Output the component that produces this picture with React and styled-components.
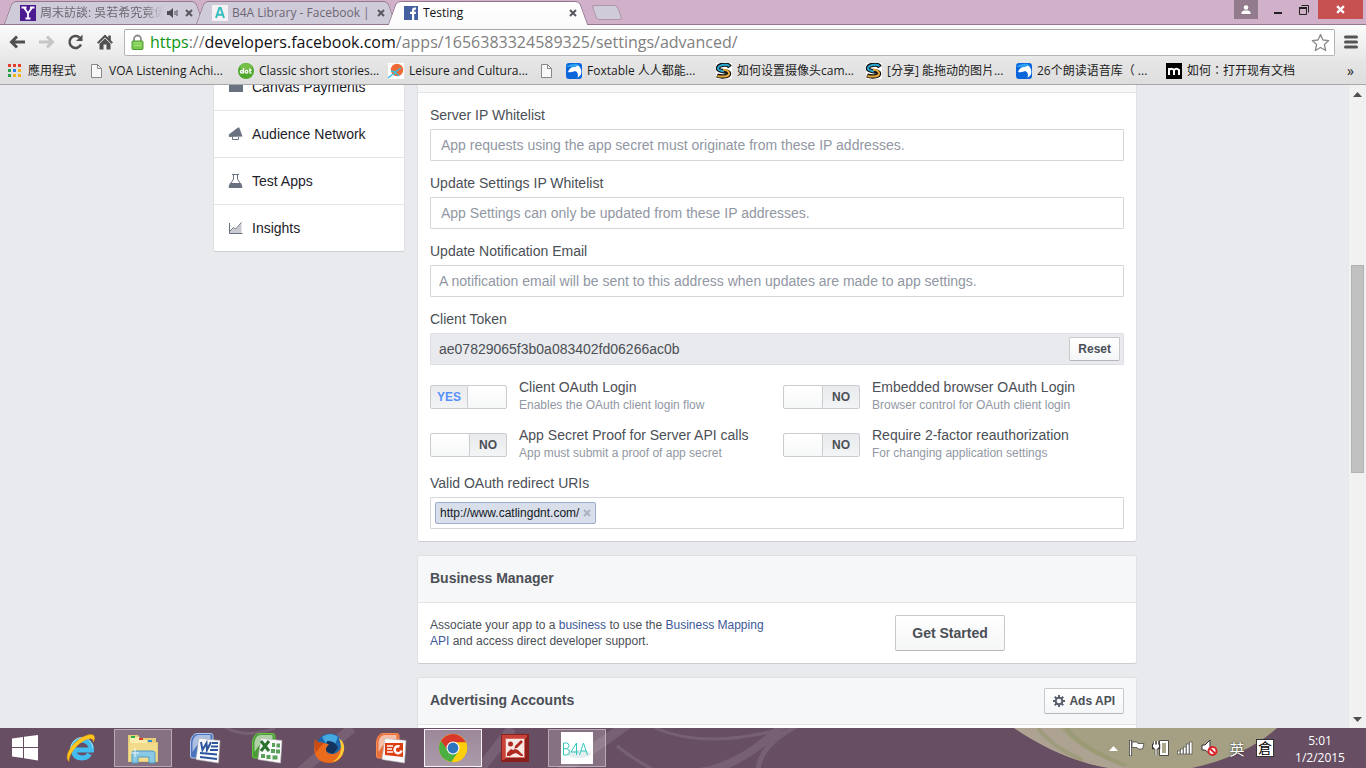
import React from "react";
import styled, { createGlobalStyle, css } from "styled-components";

const ui = `"Open Sans", "Noto Sans CJK TC", sans-serif`;
const fb = `"Liberation Sans", Arial, sans-serif`;

const Global = createGlobalStyle`
  * { box-sizing: border-box; }
  html, body { margin: 0; }
  body { font-family: ${fb}; font-size: 14px; color: #4b4f56; }
  button, input { font: inherit; color: inherit; }
`;

const Screen = styled.div`
  display: flex;
  flex-direction: column;
  height: 100vh;
  overflow: hidden;
`;

/* ---------- browser window ---------- */
const TabStrip = styled.header`
  display: flex;
  flex: none;
  height: 25px;
  padding-left: 8px;
  background: #d1b0c9;
  border-bottom: 1px solid #94788d;
  font-family: ${ui};
  font-size: 12px;
`;

const TabBox = styled.div`
  position: relative;
  display: flex;
  align-items: center;
  flex: none;
  width: 192px;
  height: 25px;
  padding: 0 4px 0 12px;
  z-index: ${(p) => (p.$active ? 2 : 1)};
  color: ${(p) => (p.$active ? "#111" : "#6c6873")};

  &::before,
  &::after {
    content: "";
    position: absolute;
    z-index: -1;
    top: 1px;
    bottom: ${(p) => (p.$active ? 0 : 1)}px;
    width: 60%;
    background: ${(p) => (p.$active ? "linear-gradient(#fff, #fbfbfb)" : "#d0cbd9")};
    border: 0 solid #94788d;
    border-top-width: 1px;
  }
  &::before {
    left: 0;
    transform: skewX(-20deg);
    border-left-width: 1px;
    border-top-left-radius: 5px;
  }
  &::after {
    right: 0;
    transform: skewX(20deg);
    border-right-width: 1px;
    border-top-right-radius: 5px;
  }
`;

const TabLabel = styled.span`
  flex: 1;
  min-width: 0;
  margin-left: 4px;
  overflow: hidden;
  white-space: nowrap;
  line-height: 20px;
  ${(p) =>
    p.$fade &&
    css`
      margin-right: 4px;
      mask-image: linear-gradient(to right, #000 85%, transparent);
    `}
`;

const BareButton = styled.button`
  display: flex;
  align-items: center;
  justify-content: center;
  flex: none;
  padding: 0;
  border: 0;
  background: none;
`;

const TabClose = styled(BareButton)`
  width: 14px;
  height: 14px;
  margin-left: 4px;
`;

const NewTab = styled(BareButton)`
  width: 26px;
  height: 15px;
  margin: 5px 0 0 10px;
  background: #d0cbd9;
  border: 1px solid #b096ac;
  border-radius: 3px;
  transform: skewX(20deg);
`;

const WindowControls = styled.div`
  display: flex;
  margin-left: auto;
  padding-right: 3px;
`;

const WindowButton = styled(BareButton)`
  width: ${(p) => p.$w}px;
  height: 19px;
  margin-right: ${(p) => p.$gap || 0}px;
  background: ${(p) => p.$bg || "transparent"};
`;

const Toolbar = styled.nav`
  display: flex;
  align-items: center;
  flex: none;
  height: 34px;
  padding: 0 8px;
  background: linear-gradient(#fbfbfb, #e8e8e8);
`;

const NavButton = styled(BareButton)`
  width: 19px;
  height: 24px;
  margin-right: 10px;
`;

const Omnibox = styled.div`
  display: flex;
  align-items: center;
  flex: 1;
  min-width: 0;
  height: 27px;
  padding: 0 4px 0 6px;
  background: #fff;
  border: 1px solid #b4b4b4;
  border-top-color: #a4a4a4;
  border-radius: 2px;
  font-family: ${ui};
  font-size: 16px;
  line-height: 24px;
`;

const Url = styled.div`
  flex: 1;
  min-width: 0;
  margin-left: 6px;
  overflow: hidden;
  white-space: nowrap;
  color: #808080;
`;
const Secure = styled.span`color: #0b9512;`;
const Host = styled.span`color: #111;`;

const MenuButton = styled(BareButton)`
  width: 14px;
  margin-left: 9px;
`;

const Bookmarks = styled.nav`
  display: flex;
  align-items: center;
  flex: none;
  height: 26px;
  padding: 0 12px 2px 6px;
  background: linear-gradient(#e6e6e6, #dedede);
  border-bottom: 1px solid #a8a8a8;
  font-family: ${ui};
  font-size: 12px;
`;

const Bookmark = styled.a`
  display: flex;
  align-items: center;
  flex: none;
  gap: 5px;
  width: ${(p) => p.$w || 150}px;
  overflow: hidden;
  color: #1c1c1c;
  line-height: 20px;
  text-decoration: none;
  white-space: nowrap;
  svg { flex: none; }
`;

const More = styled(BareButton)`
  margin-left: auto;
  font-size: 14px;
  line-height: 20px;
  color: #222;
`;

/* ---------- page ---------- */
const Viewport = styled.div`
  display: flex;
  flex: 1;
  min-height: 0;
  overflow: hidden;
  background: #e9eaed;
`;

const Page = styled.div`
  display: grid;
  grid-template-columns: 192px minmax(0, 1fr);
  align-items: start;
  gap: 12px;
  width: 100%;
  max-width: 925px;
  margin: 0 auto;
  padding-left: 1px;
`;

const Scrollbar = styled.div`
  display: flex;
  flex-direction: column;
  align-items: center;
  justify-content: space-between;
  flex: none;
  width: 17px;
  padding: 7px 0 6px;
  background: #f1f1f1;
`;
const Thumb = styled.div`
  width: 13px;
  height: 33%;
  margin-bottom: 76px;
  background: #c1c1c1;
  border: 1px solid #b2b2b2;
`;

const panel = css`
  background: #fff;
  border: 1px solid #dfe0e4;
  border-bottom-color: #cdced3;
  border-radius: 3px;
`;

const Side = styled.nav`
  ${panel}
  margin-top: -23px;
`;

const SideLink = styled.a`
  display: flex;
  align-items: center;
  gap: 8px;
  height: 47px;
  padding-left: 14px;
  color: #1d2129;
  text-decoration: none;
  & + & { border-top: 1px solid #e5e5e5; }
`;

const Main = styled.main`
  display: flex;
  flex-direction: column;
  gap: 13px;
`;

const Card = styled.section`
  ${panel}
  ${(p) =>
    p.$cut &&
    css`
      border-top: 0;
      border-radius: 0 0 3px 3px;
    `}
`;

const CardHead = styled.div`
  display: flex;
  align-items: center;
  justify-content: space-between;
  height: ${(p) => (p.$cut ? 8 : 47)}px;
  padding: 0 12px;
  background: #f6f7f8;
  border-bottom: 1px solid #e5e5e5;
  border-radius: 3px 3px 0 0;
`;

const CardTitle = styled.h2`
  margin: 0;
  padding-bottom: 2px;
  font-size: 14px;
  line-height: 20px;
  font-weight: bold;
`;

const Fields = styled.form`
  display: flex;
  flex-direction: column;
  gap: 12px;
  padding: 12px;
`;

const Field = styled.div`
  display: flex;
  flex-direction: column;
  gap: 4px;
`;

const Label = styled.label`
  line-height: 20px;
`;

const TextInput = styled.input`
  width: 100%;
  height: 32px;
  padding: 0 ${(p) => p.$pad || 8}px;
  background: #fff;
  border: 1px solid #d3d6db;
  border-radius: 1px;
  &::placeholder { color: #9197a3; opacity: 1; }
`;

const InputRow = styled.div`
  display: flex;
  align-items: center;
  height: 32px;
  padding: 0 ${(p) => (p.$filled ? 3 : 4)}px;
  background: ${(p) => (p.$filled ? "#e9eaed" : "#fff")};
  border: 1px solid ${(p) => (p.$filled ? "#dcdee3" : "#d3d6db")};
  border-radius: 1px;
`;

const InnerInput = styled.input`
  flex: 1;
  min-width: 0;
  height: 28px;
  padding: 0 5px;
  border: 0;
  background: transparent;
`;

const Button = styled.button`
  display: flex;
  align-items: center;
  justify-content: center;
  gap: 4px;
  flex: none;
  height: ${(p) => (p.$large ? 36 : 26)}px;
  padding: 0 ${(p) => (p.$large ? 16 : 8)}px;
  background: linear-gradient(#fff, #f5f6f7);
  border: 1px solid #c8c9cc;
  border-bottom-color: #b5b6b9;
  border-radius: 2px;
  color: #4b4f56;
  font-size: ${(p) => (p.$large ? 14 : 12)}px;
  font-weight: bold;
`;

const ResetButton = styled(Button)`
  height: 24px;
`;

const Options = styled.div`
  display: grid;
  grid-template-columns: 1fr 1fr;
  gap: 12px;
`;

const Option = styled.label`
  position: relative;
  display: flex;
  align-items: center;
  gap: 12px;
`;

const HiddenCheck = styled.input`
  position: absolute;
  width: 77px;
  height: 24px;
  margin: 0;
  opacity: 0;
`;

const Track = styled.span`
  display: flex;
  flex: none;
  flex-direction: ${(p) => (p.$on ? "row" : "row-reverse")};
  width: 77px;
  height: 24px;
  margin-top: 4px;
  background: linear-gradient(#e9eaed, #f3f4f5);
  border: 1px solid #cbccd0;
  border-radius: 2px;
`;
const Word = styled.span`
  flex: 1;
  color: ${(p) => (p.$on ? "#5890ff" : "#4b4f56")};
  font-size: 12px;
  font-weight: bold;
  line-height: 22px;
  text-align: center;
`;
const Knob = styled.span`
  width: 39px;
  background: linear-gradient(#fff, #f6f7f8);
  border: 0 solid #cbccd0;
  border-width: ${(p) => (p.$on ? "0 0 0 1px" : "0 1px 0 0")};
  border-radius: 2px;
`;

const OptionText = styled.span`
  display: flex;
  flex-direction: column;
  line-height: 20px;
`;
const Hint = styled.small`
  color: #9197a3;
  font-size: 12px;
  line-height: 16px;
`;

const Token = styled.span`
  display: flex;
  align-items: center;
  gap: 4px;
  height: 22px;
  padding: 0 4px;
  background: #d8dfea;
  border: 1px solid #9daccc;
  border-radius: 2px;
  color: #141823;
  font-size: 12px;
`;

const Split = styled.div`
  display: grid;
  grid-template-columns: 352px 1fr;
  align-items: center;
  padding: 12px;
`;
const Copy = styled.p`
  margin: 0;
  font-size: 12px;
  line-height: 16px;
`;
const Link = styled.a`
  color: #3b5998;
  text-decoration: none;
`;
const Centered = styled.div`
  display: flex;
  justify-content: center;
  padding-right: 6px;
`;

/* ---------- taskbar ---------- */
const Taskbar = styled.footer`
  position: relative;
  display: flex;
  flex: none;
  height: 40px;
  background: #674e63;
  color: #fff;
  font-family: ${ui};
  font-size: 12px;
`;
const Wallpaper = styled.svg`
  position: absolute;
  right: 0;
  top: 0;
`;
const StartButton = styled(BareButton)`
  position: relative;
  width: 50px;
`;
const TaskButton = styled(BareButton)`
  position: relative;
  width: 58px;
  height: 38px;
  margin: 1px 2px;
  border: 1px solid transparent;
  ${(p) =>
    p.$state === "open" &&
    css`
      background: rgba(255, 255, 255, 0.2);
      border-color: rgba(255, 255, 255, 0.4);
    `}
  ${(p) =>
    p.$state === "active" &&
    css`
      background: linear-gradient(#9b8799, #ab9ba9);
      border-color: #f7f2f6;
    `}
`;
const Tray = styled.div`
  position: relative;
  display: flex;
  align-items: center;
  margin-left: auto;
  padding-right: 3px;
`;
const TrayButton = styled(BareButton)`
  width: ${(p) => p.$w || 24}px;
  height: 40px;
  font-size: 15px;
  text-shadow: 0 0 2px #222;
`;
const Clock = styled.time`
  width: 86px;
  padding-top: 1px;
  line-height: 17px;
  text-align: center;
`;

/* ---------- drawings ---------- */
const Cross = ({ size = 8, color = "#5c5c5c", w = 2 }) => (
  <svg width={size} height={size} viewBox="0 0 8 8">
    <path d="M1 1 7 7M7 1 1 7" stroke={color} strokeWidth={w} />
  </svg>
);

const YahooIcon = () => (
  <svg width="16" height="16" viewBox="0 0 16 16">
    <rect width="16" height="16" fill="#4b1b8f" />
    <path d="M1.500 2.500h5M10 2.500h4.500M4 2.500l4 6L12 2.500M8 8v5.500M5.500 13.500h5" stroke="#fff" strokeWidth="1.800" fill="none" />
  </svg>
);
const AIcon = () => (
  <svg width="16" height="16" viewBox="0 0 16 16">
    <rect width="16" height="16" fill="#f4f0f3" />
    <path d="M4 13 7.300 3h1.400L12 13M5 9.800h6" stroke="#33bdbd" strokeWidth="2" fill="none" />
  </svg>
);
const FacebookIcon = () => (
  <svg width="15" height="16" viewBox="0 0 15 16">
    <rect y="1" width="14" height="14" fill="#4560a0" />
    <path d="M8 15V9H6V6.800h2V5.200C8 3.400 9 2.500 10.700 2.500H12v2.200h-1.100c-.6 0-.7.300-.7.800v1.300H12L11.800 9h-1.600v6z" fill="#fff" />
  </svg>
);
const Speaker = () => (
  <svg width="11" height="10" viewBox="0 0 11 10">
    <path d="M0 3h2.500L6 0v10L2.500 7H0z" fill="#4e4b55" />
    <path d="M8 3v4M10 2v6" stroke="#4e4b55" />
  </svg>
);

const PageIcon = () => (
  <svg width="16" height="16" viewBox="0 0 16 16">
    <path d="M3.500 1.500h6l4 4v9h-10z" fill="#f8f8f8" stroke="#888" />
    <path d="M9.500 1.500v4h4" fill="none" stroke="#888" />
  </svg>
);
const AppsIcon = () => (
  <svg width="17" height="16" viewBox="0 0 17 16">
    {["#e33b2e", "#e33b2e", "#e33b2e", "#2a9c4a", "#2b7de9", "#f2b21b", "#2a9c4a", "#f2b21b", "#f2b21b"].map((c, i) => (
      <rect key={i} x={2 + (i % 3) * 5} y={1 + Math.floor(i / 3) * 5} width="3" height="3" fill={c} />
    ))}
  </svg>
);
const DotIcon = () => (
  <svg width="16" height="16" viewBox="0 0 16 16">
    <circle cx="8" cy="8" r="8" fill="#4fa829" />
    <ellipse cx="8" cy="4" rx="6" ry="3.500" fill="#77c14b" />
    <g fill="none" stroke="#fff" strokeWidth="1.300">
      <circle cx="3.800" cy="8.800" r="1.400" /><path d="M5.500 5v5.400" />
      <circle cx="8.500" cy="8.800" r="1.400" /><path d="M12 5.500v4q0 .8 1.500.7M11 7.200h2.800" />
    </g>
  </svg>
);
const LeisureIcon = () => (
  <svg width="16" height="16" viewBox="0 0 16 16">
    <rect width="16" height="16" fill="#fff" />
    <circle cx="9" cy="7" r="6.200" fill="#f06a35" />
    <path d="M0 15 5 11M3 8l4 1 6-4M7 9l4 4M7 9 6 12" stroke="#35bfe0" strokeWidth="1.500" fill="none" />
  </svg>
);
const FoxIcon = () => (
  <svg width="16" height="16" viewBox="0 0 16 16">
    <rect width="16" height="16" rx="3" fill="#0b66dc" />
    <path d="M0 4q5-4 12-3l2 3H0z" fill="#2aa0f0" />
    <path d="M2 9C3 5.500 6 3.500 9 4l3-1.500c3 2 4 5 3 9L11.500 15c1-3 .5-6-2.500-7-2 1-4 1.500-7 1z" fill="#fff" />
  </svg>
);
const SwirlIcon = () => (
  <svg width="16" height="16" viewBox="0 0 16 16">
    <rect width="16" height="16" fill="#fff" />
    <path d="M14 4C11 0 2 1.500 2 5.500S13 7 13 10.500 5 14 1 12.500" fill="none" stroke="#151515" strokeWidth="4.500" />
    <path d="M13.500 3C10 .5 2 2 2 5.500 2 7.500 6 8 8 8.500" fill="none" stroke="#2aa5d0" strokeWidth="2" />
    <path d="M7 6.500c4 .5 6.500 2 6 4.500-.5 3-8 3-11.500 2" fill="none" stroke="#e6aa3a" strokeWidth="2" />
  </svg>
);
const MIcon = () => (
  <svg width="16" height="16" viewBox="0 0 16 16">
    <rect width="16" height="16" fill="#000" />
    <path d="M3 12V5M3 7q2.500-2.500 5 0v5M8 7q2.500-2.500 5 0v5" stroke="#fff" strokeWidth="2" fill="none" />
  </svg>
);

const BackArrow = ({ color, flip }) => (
  <svg width="17" height="14" viewBox="0 0 17 14">
    <path d={flip ? "M1 7h13M9 1.500 14.500 7 9 12.500" : "M16 7H3M8 1.500 2.500 7 8 12.500"} stroke={color} strokeWidth="3" fill="none" />
  </svg>
);
const Reload = () => (
  <svg width="17" height="16" viewBox="0 0 17 16">
    <path d="M14 10.500A6 6 0 1 1 12.500 3.500" stroke="#505050" strokeWidth="2.500" fill="none" />
    <path d="M15.500.500v6.500H9z" fill="#505050" />
  </svg>
);
const Home = () => (
  <svg width="16" height="16" viewBox="0 0 16 16">
    <path d="M8 .500 0 8.500l1.500 1.300L8 3.400l6.500 6.400L16 8.500 13.800 6.300V1.500h-2.500v2.300z" fill="#505050" />
    <path d="M2.500 9.800 8 4.600l5.500 5.200V15.500h-4v-5h-3v5h-4z" fill="#505050" />
  </svg>
);
const Lock = () => (
  <svg width="13" height="16" viewBox="0 0 12 16">
    <path d="M2.500 8V5a3.500 3.500 0 0 1 7 0v3" fill="none" stroke="#8c8c8c" strokeWidth="1.800" />
    <rect x=".5" y="7" width="11" height="8.500" rx="1" fill="#7ccb4f" stroke="#4f9a33" />
    <path d="M2 9h8M2 11.500h8" stroke="#a9e284" />
  </svg>
);
const Star = () => (
  <svg width="19" height="19" viewBox="0 0 19 19">
    <path d="M9.500 1.500 12 7l5.700.600-4.300 4 1.300 5.900-5.200-3-5.200 3 1.300-5.900-4.300-4L7 7z" fill="#fff" stroke="#8a8a8a" strokeWidth="1.300" strokeLinejoin="round" />
  </svg>
);
const Menu = () => (
  <svg width="14" height="14" viewBox="0 0 14 14">
    <path d="M1.500 2h11M1.500 7h11M1.500 12h11" stroke="#555" strokeWidth="3" strokeLinecap="round" />
  </svg>
);
const Person = () => (
  <svg width="10" height="10" viewBox="0 0 10 10">
    <circle cx="5" cy="2.500" r="2.300" fill="#fff" />
    <path d="M.5 9V7.500Q1 6 3 5.500h4q2 .5 2.500 2V9z" fill="#fff" />
  </svg>
);

const CardIcon = () => (
  <svg width="16" height="16" viewBox="0 0 16 16">
    <path d="M1 3h14v2H1zM1 6h14v7H1z" fill="#6a7180" />
  </svg>
);
const Megaphone = () => (
  <svg width="16" height="16" viewBox="0 0 16 16">
    <path d="M.8 8.500 10 1.500h1.200L14.500 10.500 1 11z" fill="#6a7180" />
    <path d="M4.500 11v2.500h6V11" fill="none" stroke="#6a7180" />
  </svg>
);
const Flask = () => (
  <svg width="16" height="16" viewBox="0 0 16 16">
    <path d="M4 1.500h7M5.500 2v4L2.500 11M9.500 2v4l3 5" fill="none" stroke="#6a7180" />
    <path d="M2 10h11l1.300 3.500q.2 1.500-1 1.500H1.700q-1.200 0-1-1.500z" fill="#6a7180" />
  </svg>
);
const Chart = () => (
  <svg width="16" height="16" viewBox="0 0 16 16">
    <path d="M2 11.500 5.500 8l2 1.500L13.500 3v10H2z" fill="#c9ccd3" />
    <path d="M2 11 5.500 7.500l2 1.500 6-6.500" fill="none" stroke="#6a7180" />
    <path d="M1.500 3v10.500H14.500" fill="none" stroke="#6a7180" />
  </svg>
);
const Gear = () => (
  <svg width="12" height="12" viewBox="0 0 12 12">
    <circle cx="6" cy="6" r="3.300" fill="none" stroke="#5a6070" strokeWidth="2" />
    {[0, 45, 90, 135, 180, 225, 270, 315].map((a) => (
      <path key={a} d="M5 0h2v2.500H5z" fill="#5a6070" transform={`rotate(${a} 6 6)`} />
    ))}
  </svg>
);

const WindowsLogo = () => (
  <svg width="28" height="28" viewBox="0 0 28 28">
    <path d="M1 4.500 12 3V13H1zM13 2.800 27 1v12H13zM1 14h11v10L1 22.500zM13 14h14v12.500l-14-2.300z" fill="#fff" />
  </svg>
);
const IeLogo = () => (
  <svg width="32" height="32" viewBox="0 0 32 32">
    <path d="M7.500 17.500A9.300 9.300 0 0 1 26.500 18H8.500q.5 8 9 8 4.500 0 7-4" fill="none" stroke="#43bdf0" strokeWidth="5" />
    <path d="M6 17A11 11 0 0 1 28 16" fill="none" stroke="#a6e6fb" />
    <path d="M4 29.500C-2 24 8 9 20 4q9-3.500 9.500 1.500.2 2-1 4.500Q28.500 5 21 7.500C11 12 3 24 4 29.500z" fill="#ffc61e" stroke="#e09a10" strokeWidth=".5" />
  </svg>
);
const FolderLogo = () => (
  <svg width="34" height="32" viewBox="0 0 34 32">
    <path d="M2 3h10l2 3h16v4h2v20H2z" fill="#e7cd76" />
    <path d="M4 5h9v3h8v3h10v18H3z" fill="#fbedb0" />
    <path d="M3 11h28v18H3z" fill="#f2dc8c" />
    <rect x="5" y="4" width="4" height="2" fill="#22b14c" />
    <rect x="13" y="6" width="4" height="2" fill="#e04020" />
    <rect x="22" y="8" width="4" height="2" fill="#2c90e0" />
    <path d="M6 31V21q0-2 2-2h18q3 0 3 2v10h-6v-6H12v6z" fill="#8ac9e4" stroke="#4c9cc4" />
    <path d="M9 16v9M5 21h8" stroke="#fff" opacity=".8" />
  </svg>
);
const OfficeFrame = ({ color, light, children }) => (
  <svg width="32" height="32" viewBox="0 0 32 32">
    <path d="M8 1.500h14q2 0 2 2V24q0 2-2 2H3q-1.500 0-1.500-2V10Q2.500 2 8 1.500z" fill={color} stroke={light} />
    <path d="M9 3h12.500v4Q10 8 3.500 20V10Q4.500 4 9 3z" fill="#fff" opacity=".55" />
    <path d="M10 6.500 31 8.500 29.500 31 7 27.500z" fill="#fbfbfd" stroke="#bbb" strokeWidth=".6" />
    {children}
  </svg>
);
const WordLogo = () => (
  <OfficeFrame color="#4a74bd" light="#b5c9ec">
    <path d="m12 10 1.500 8 4-7 .5 7 4-8" fill="none" stroke="#2b569e" strokeWidth="2" />
    <path d="M23 11h6M22 14.500h7M21 18h8M11 21l17 1.500M11 25l17 2" stroke="#2b569e" strokeWidth="1.800" />
  </OfficeFrame>
);
const ExcelLogo = () => (
  <OfficeFrame color="#4d9b3b" light="#63c83a">
    <path d="m10 9 8 10M18 9l-8 10" stroke="#2b7430" strokeWidth="3" />
    <path d="M21 11h3v4h-3zM25.500 11.500h3.500v4h-3.500zM20 17h4v4h-4zM25 17.500h4v4h-4zM10 22h4v4h-4zM15.500 23h4v4h-4zM21.500 23.500h5v4h-5z" fill="#5aa05a" />
  </OfficeFrame>
);
const PptLogo = () => (
  <OfficeFrame color="#e8703c" light="#fb8c50">
    <path d="M10 11h18v14L10 23z" fill="#dc3e12" />
    <path d="M12 14h6M12 17h5M12 20h6" stroke="#fff" strokeWidth="1.500" />
    <path d="M24.500 14.500a3.500 3.500 0 1 0 2 4" fill="none" stroke="#fff" strokeWidth="2.500" />
  </OfficeFrame>
);
const FirefoxLogo = () => (
  <svg width="32" height="32" viewBox="0 0 32 32">
    <circle cx="17" cy="15" r="13.500" fill="#1d66ac" />
    <path d="M9 5q8-6 16 0l-3 7-8 1z" fill="#46a9e0" />
    <path d="M14 9q8-1 11 7l-5 6-8-3z" fill="#15335f" />
    <path d="M2 7q1 2 3 3l6 1q2 1 5 1l-3 4q-1 6 7 6 6-1 8-7 1-5-2-9 6 5 5 12-2 12-14 13Q4 31 1.500 20 1 13 2 7z" fill="#ea6b1c" />
    <path d="M26 6q6 5 5 12-2 10-12 12 8-4 9-13 0-6-2-11z" fill="#ffc93a" />
    <path d="M2 7q1 2 3 3l6 1-5 5-3 5q-2-7-1-14z" fill="#c94a13" />
  </svg>
);
const ChromeLogo = () => (
  <svg width="30" height="30" viewBox="0 0 30 30">
    <circle cx="15" cy="15" r="14" fill="#fbcf0b" />
    <path d="M2.900 8A14 14 0 0 1 27.100 8L28 9.500H15L9.500 18z" fill="#d9382b" />
    <path d="M2.900 8A14 14 0 0 0 13.500 29l7-10.500L10 17.500z" fill="#4caf41" />
    <path d="M20.500 18.500 13.500 29A14 14 0 0 0 28 9.500H15z" fill="#fbcf0b" />
    <circle cx="15" cy="15" r="6.500" fill="#fff" />
    <circle cx="15" cy="15" r="5.400" fill="#2f74c0" />
  </svg>
);
const PictureLogo = () => (
  <svg width="28" height="28" viewBox="0 0 28 28">
    <rect width="28" height="28" fill="#8d1f1c" />
    <path d="M1 1h25v2L3 26H1z" fill="#c9423a" />
    <rect x="4.500" y="4.500" width="19" height="19" fill="#f8e9e5" stroke="#d86a60" />
    <circle cx="9.500" cy="10" r="2.500" fill="#b02822" />
    <path d="m14 12 6-6 2 2-6 6-2.500.5z" fill="#b02822" />
    <path d="M6 22v-3l4-4 2 1 2-1 3 1 5 5v1h-2l-5-3-3 1-3 2z" fill="#b02822" />
  </svg>
);
const B4aLogo = () => (
  <svg width="32" height="32" viewBox="0 0 32 32">
    <rect width="32" height="32" fill="#fff" />
    <ellipse cx="18" cy="22" rx="12" ry="4" fill="#e4eeee" />
    <path d="M2.500 11v12h3q3 0 3-3t-3-3.300q2.500-.7 2.500-3T5.500 11zM2.500 16.700h3M15.500 23V11L10 20h7.500M18.500 23l4-12 4 12M20 19h5" fill="none" stroke="#35c7bd" />
  </svg>
);

const Flag = () => (
  <svg width="18" height="18" viewBox="0 0 18 18">
    <path d="M2.500 1v16" stroke="#333" strokeWidth="3" />
    <path d="M2.500 1.500v15" stroke="#fff" strokeWidth="1.500" />
    <path d="M4 3h5l1 1.500h6L14.500 10H10L9 8.500H4z" fill="#fff" stroke="#333" strokeWidth=".7" />
  </svg>
);
const Power = () => (
  <svg width="18" height="18" viewBox="0 0 18 18">
    <rect x="9" y="3" width="6" height="12" fill="#aaa68b" stroke="#333" strokeWidth="3.500" />
    <rect x="9" y="3" width="6" height="12" fill="#aaa68b" stroke="#fff" strokeWidth="2" />
    <path d="M2.500 2v4M5.500 2v4M1 6h6v3H1zM4 9v7" stroke="#333" strokeWidth="2.500" />
    <path d="M2.500 2v4M5.500 2v4M4 9v7" stroke="#fff" strokeWidth="1.300" />
    <path d="M1 5.500h6V8L5 10H3L1 8z" fill="#fff" />
  </svg>
);
const Signal = () => (
  <svg width="18" height="16" viewBox="0 0 18 16">
    {[3, 5, 7, 10, 12].map((h, i) => (
      <rect key={i} x={1.5 + i * 3} y={14 - h} width="2.500" height={h} fill="#fff" stroke="#444" strokeWidth=".6" />
    ))}
  </svg>
);
const Muted = () => (
  <svg width="18" height="18" viewBox="0 0 18 18">
    <path d="M2 6h3l5-5v14l-5-4H2z" fill="#fff" stroke="#333" />
    <circle cx="12.500" cy="12" r="4" fill="#fff" stroke="#d8262a" strokeWidth="2" />
    <path d="m9.800 9.300 5.400 5.400" stroke="#d8262a" strokeWidth="2" />
  </svg>
);
const Ime = styled.span`
  width: 16px;
  height: 16px;
  background: #fff;
  outline: 1px solid #333;
  color: #000;
  font-size: 14px;
  line-height: 15px;
  text-align: center;
  text-shadow: none;
`;
const Triangle = ({ down, color = "#505050" }) => (
  <svg width="9" height="5" viewBox="0 0 9 5">
    <path d={down ? "M0 0h9L4.500 5z" : "M0 5h9L4.500 0z"} fill={color} />
  </svg>
);

/* ---------- composed parts ---------- */
const Tab = ({ icon, title, active, audible }) => (
  <TabBox $active={active}>
    {icon}
    <TabLabel $fade={audible}>{title}</TabLabel>
    {audible && <Speaker />}
    <TabClose aria-label="Close tab">
      <Cross color="#5a5760" />
    </TabClose>
  </TabBox>
);

const Toggle = ({ on, title, hint }) => (
  <Option>
    <HiddenCheck type="checkbox" defaultChecked={on} />
    <Track $on={on}>
      <Word $on={on}>{on ? "YES" : "NO"}</Word>
      <Knob $on={on} />
    </Track>
    <OptionText>
      {title}
      <Hint>{hint}</Hint>
    </OptionText>
  </Option>
);

const PlainField = ({ id, label, placeholder, pad }) => (
  <Field>
    <Label htmlFor={id}>{label}</Label>
    <TextInput id={id} placeholder={placeholder} $pad={pad} />
  </Field>
);

const bookmarks = [
  [<AppsIcon />, "應用程式", 82],
  [<PageIcon />, "VOA Listening Achi..."],
  [<DotIcon />, "Classic short stories..."],
  [<LeisureIcon />, "Leisure and Cultura..."],
  [<PageIcon />, "", 28],
  [<FoxIcon />, "Foxtable 人人都能..."],
  [<SwirlIcon />, "如何设置摄像头cam..."],
  [<SwirlIcon />, "[分享] 能拖动的图片..."],
  [<FoxIcon />, "26个朗读语音库（ ..."],
  [<MIcon />, "如何：打开现有文档"],
];

const tasks = [
  ["Internet Explorer", <IeLogo />],
  ["File Explorer", <FolderLogo />, "open"],
  ["Word", <WordLogo />],
  ["Excel", <ExcelLogo />],
  ["Firefox", <FirefoxLogo />],
  ["PowerPoint", <PptLogo />],
  ["Chrome", <ChromeLogo />, "active"],
  ["Picture Manager", <PictureLogo />],
  ["B4A", <B4aLogo />, "open"],
];

export default function App() {
  return (
    <Screen>
      <Global />
      <TabStrip>
        <Tab icon={<YahooIcon />} title="周末訪談: 吳若希究竟係" audible />
        <Tab icon={<AIcon />} title="B4A Library - Facebook |" />
        <Tab icon={<FacebookIcon />} title="Testing" active />
        <NewTab aria-label="New tab" />
        <WindowControls>
          <WindowButton $w={24} $gap={8} $bg="#937b8e" aria-label="Profile"><Person /></WindowButton>
          <WindowButton $w={24} aria-label="Minimize">
            <svg width="8" height="10"><path d="M0 8h8" stroke="#222" strokeWidth="2" /></svg>
          </WindowButton>
          <WindowButton $w={28} aria-label="Restore">
            <svg width="10" height="10"><path d="M.5 3h7v6.500h-7zM2.500.500h7v7" fill="none" stroke="#222" /><path d="M0 3h8" stroke="#222" strokeWidth="2" /></svg>
          </WindowButton>
          <WindowButton $w={45} $bg="#c75050" aria-label="Close"><Cross size={9} color="#fff" /></WindowButton>
        </WindowControls>
      </TabStrip>

      <Toolbar>
        <NavButton aria-label="Back"><BackArrow color="#505050" /></NavButton>
        <NavButton aria-label="Forward"><BackArrow color="#c6c6c6" flip /></NavButton>
        <NavButton aria-label="Reload"><Reload /></NavButton>
        <NavButton aria-label="Home"><Home /></NavButton>
        <Omnibox>
          <Lock />
          <Url role="textbox" aria-label="Address" tabIndex={0}>
            <Secure>https</Secure>://<Host>developers.facebook.com</Host>/apps/1656383324589325/settings/advanced/
          </Url>
          <Star />
        </Omnibox>
        <MenuButton aria-label="Menu"><Menu /></MenuButton>
      </Toolbar>

      <Bookmarks>
        {bookmarks.map(([icon, text, w], i) => (
          <Bookmark key={i} href="#" $w={w}>{icon}{text}</Bookmark>
        ))}
        <More>»</More>
      </Bookmarks>

      <Viewport>
        <Page>
          <Side>
            <SideLink href="#"><CardIcon />Canvas Payments</SideLink>
            <SideLink href="#"><Megaphone />Audience Network</SideLink>
            <SideLink href="#"><Flask />Test Apps</SideLink>
            <SideLink href="#"><Chart />Insights</SideLink>
          </Side>
          <Main>
            <Card $cut>
              <CardHead $cut />
              <Fields>
                <PlainField id="server-ip" label="Server IP Whitelist" pad={10} placeholder="App requests using the app secret must originate from these IP addresses." />
                <PlainField id="settings-ip" label="Update Settings IP Whitelist" pad={10} placeholder="App Settings can only be updated from these IP addresses." />
                <PlainField id="email" label="Update Notification Email" placeholder="A notification email will be sent to this address when updates are made to app settings." />
                <Field>
                  <Label htmlFor="token">Client Token</Label>
                  <InputRow $filled>
                    <InnerInput id="token" readOnly value="ae07829065f3b0a083402fd06266ac0b" />
                    <ResetButton type="button">Reset</ResetButton>
                  </InputRow>
                </Field>
                <Options>
                  <Toggle on title="Client OAuth Login" hint="Enables the OAuth client login flow" />
                  <Toggle title="Embedded browser OAuth Login" hint="Browser control for OAuth client login" />
                  <Toggle title="App Secret Proof for Server API calls" hint="App must submit a proof of app secret" />
                  <Toggle title="Require 2-factor reauthorization" hint="For changing application settings" />
                </Options>
                <Field>
                  <Label htmlFor="uris">Valid OAuth redirect URIs</Label>
                  <InputRow>
                    <Token>
                      http://www.catlingdnt.com/
                      <BareButton type="button" aria-label="Remove"><Cross color="#a9b1c0" /></BareButton>
                    </Token>
                    <InnerInput id="uris" />
                  </InputRow>
                </Field>
              </Fields>
            </Card>

            <Card>
              <CardHead><CardTitle>Business Manager</CardTitle></CardHead>
              <Split>
                <Copy>
                  Associate your app to a <Link href="#">business</Link> to use the <Link href="#">Business Mapping API</Link> and access direct developer support.
                </Copy>
                <Centered><Button $large>Get Started</Button></Centered>
              </Split>
            </Card>

            <Card>
              <CardHead>
                <CardTitle>Advertising Accounts</CardTitle>
                <Button><Gear />Ads API</Button>
              </CardHead>
              <Fields />
            </Card>
          </Main>
        </Page>
        <Scrollbar>
          <Triangle />
          <Thumb />
          <Triangle down />
        </Scrollbar>
      </Viewport>

      <Taskbar>
        <Wallpaper width="1366" height="40" viewBox="0 0 1366 40">
          <g fill="none" stroke="#fff" opacity=".1">
            <path d="M215 -8Q240 14 275 0" strokeWidth="3" />
            <path d="M352 0 300 44M512 0 478 44M628 -4 560 44" strokeWidth="10" />
            <path d="M617 18Q650 45 700 60M655 0q50 22 130 0" strokeWidth="3" />
            <path d="M780 0q-40 38-80 44" strokeWidth="8" />
            <path d="M800 -4q-40 20-42 46" strokeWidth="5" />
          </g>
          <path d="M1014 0C1040 18 1075 35 1110 40H1192C1225 33 1255 20 1277 0z" fill="#a5a083" />
          <path d="M1014 0C1040 18 1075 35 1110 40H1130Q1080 25 1060 0z" fill="#aea293" />
          <path d="M1038 0q15 20 45 32M1066 0q15 20 60 38" fill="none" stroke="#8f9468" strokeWidth="4" opacity=".5" />
        </Wallpaper>
        <StartButton aria-label="Start"><WindowsLogo /></StartButton>
        {tasks.map(([name, icon, state]) => (
          <TaskButton key={name} aria-label={name} $state={state}>{icon}</TaskButton>
        ))}
        <Tray>
          <TrayButton aria-label="Show hidden icons"><Triangle color="#fff" /></TrayButton>
          <TrayButton aria-label="Notifications"><Flag /></TrayButton>
          <TrayButton aria-label="Power"><Power /></TrayButton>
          <TrayButton aria-label="Network"><Signal /></TrayButton>
          <TrayButton aria-label="Volume"><Muted /></TrayButton>
          <TrayButton $w={32}>英</TrayButton>
          <TrayButton><Ime>倉</Ime></TrayButton>
          <Clock>5:01<br />1/2/2015</Clock>
        </Tray>
      </Taskbar>
    </Screen>
  );
}
